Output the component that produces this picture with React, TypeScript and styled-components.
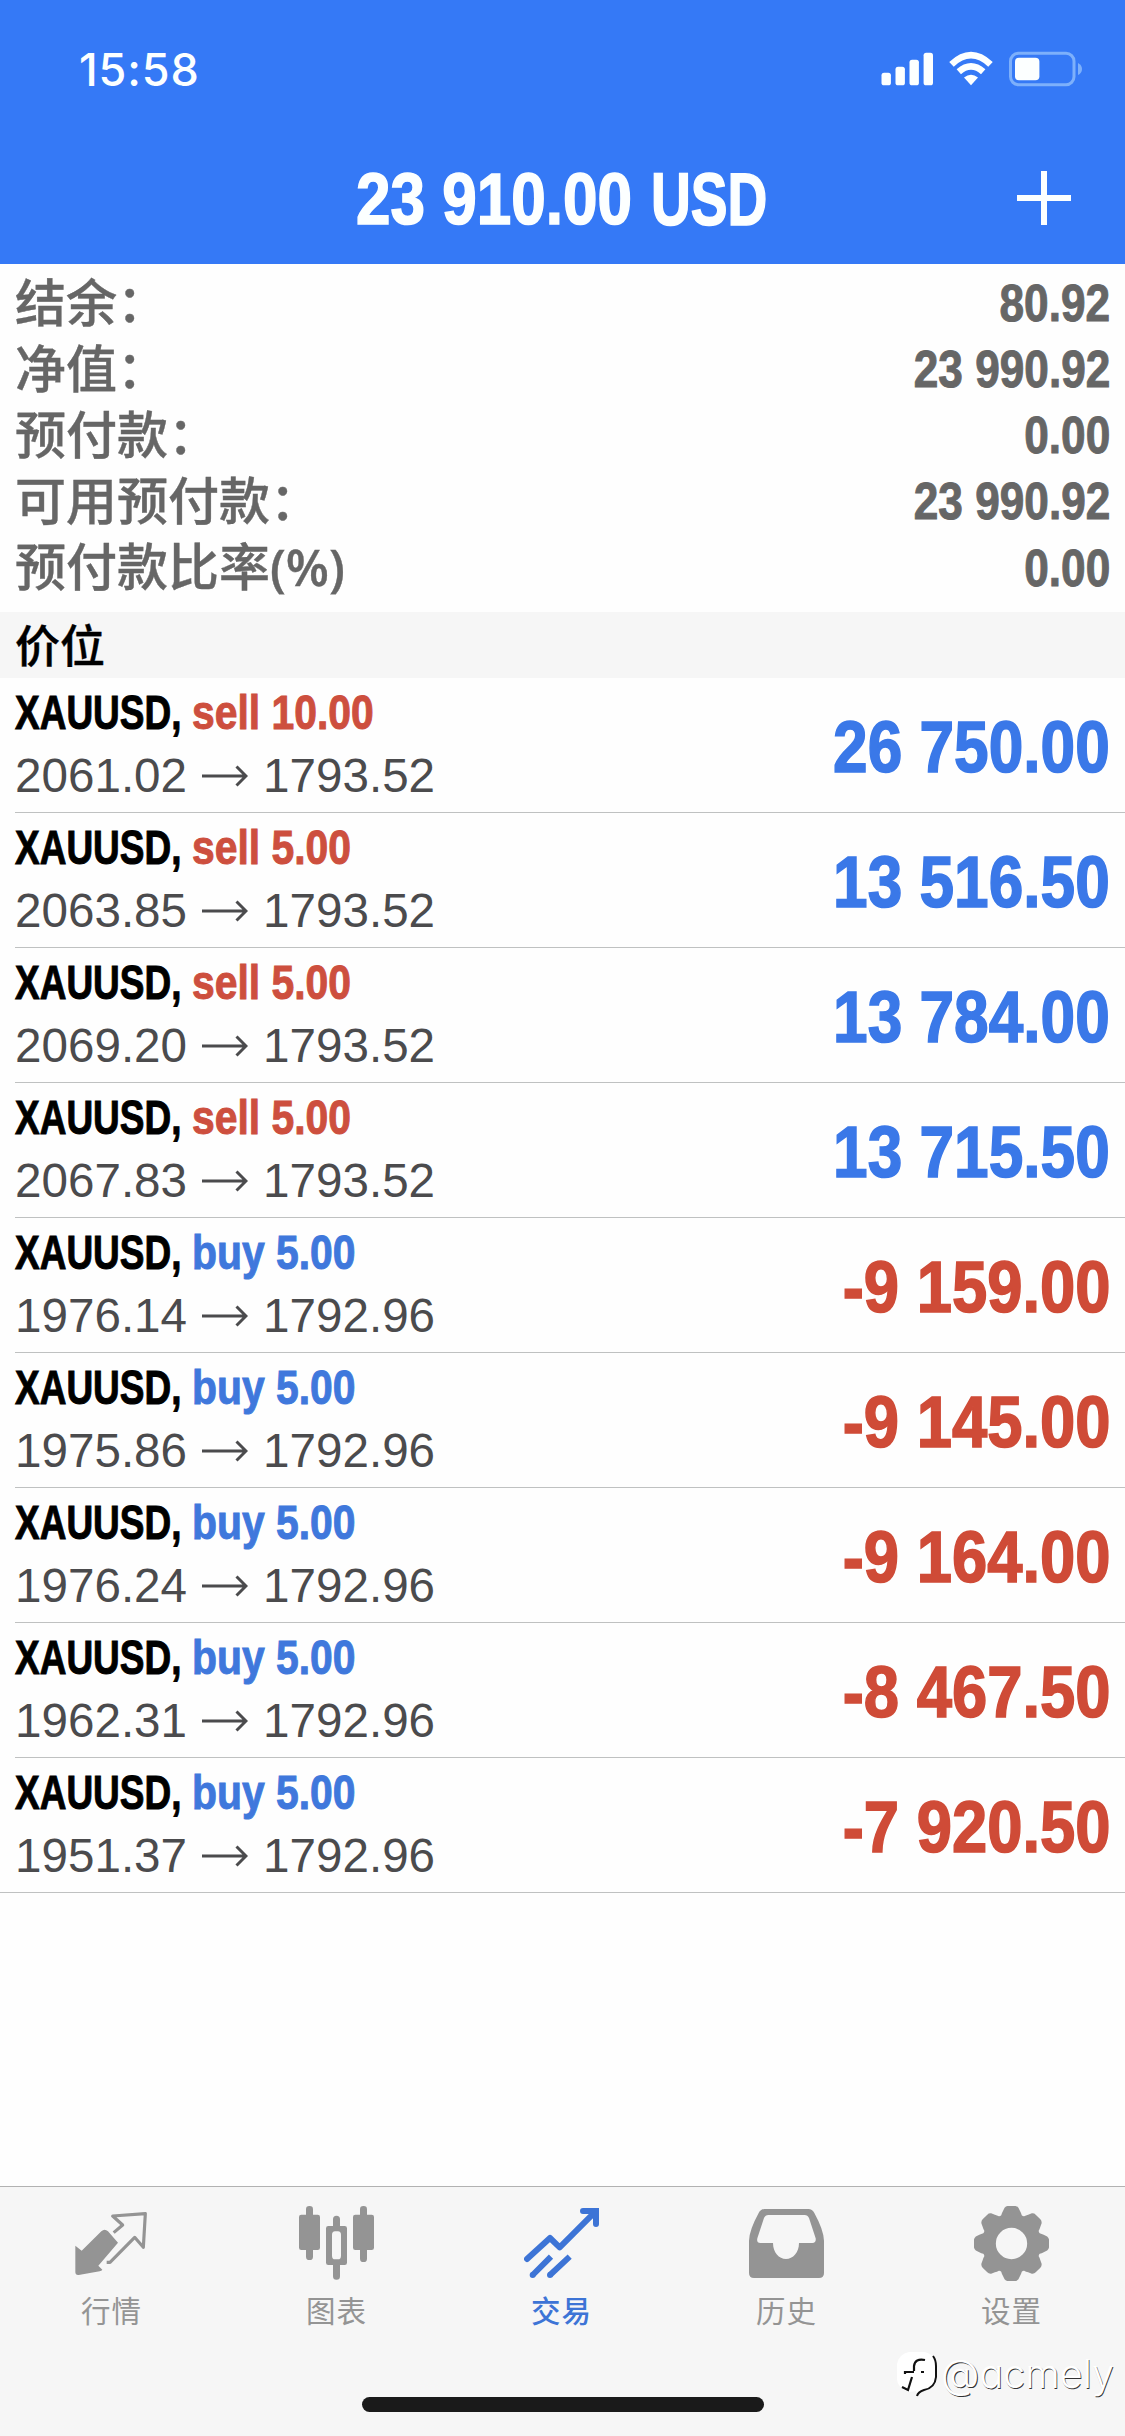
import React from 'react';
import styled, { createGlobalStyle } from 'styled-components';

const BLUE = '#3579f6';
const PROFIT = '#3a78e8';
const BUY = '#3f78dc';
const LOSS = '#cf4b37';
const SELL = '#cd4f3e';
const MUTED = '#949494';

const latin = "'Liberation Sans', Arial, 'Noto Sans CJK SC', sans-serif";
const cjk = "'Noto Sans CJK SC', sans-serif";

const GlobalStyle = createGlobalStyle`
  * { box-sizing: border-box; }
  body { margin: 0; background: #fff; }
`;

const Screen = styled.main`
  position: relative;
  display: flex;
  flex-direction: column;
  width: 1125px;
  height: 2436px;
  overflow: hidden;
  background: #fefefe;
  font-family: ${latin};
`;

const Header = styled.header`
  height: 264px;
  flex: none;
  background: ${BLUE};
  color: #fcffff;
`;

const StatusBar = styled.div`
  display: flex;
  justify-content: space-between;
  align-items: center;
  height: 138px;
  padding: 0 42px 0 79px;
`;

const Clock = styled.span`
  font: 550 45px/56px Inter, sans-serif;
  letter-spacing: 0.9px;
  padding-top: 1px;
`;

const StatusIcons = styled.svg`
  display: block;
  width: 203px;
  height: 36px;
`;

const TitleBar = styled.div`
  display: grid;
  grid-template-columns: 1fr auto 1fr;
  align-items: center;
  height: 122px;
`;

const Title = styled.h1`
  grid-column: 2;
  display: flex;
  margin: 1px 0 0;
`;

const AddButton = styled.button`
  justify-self: end;
  display: block;
  width: 54px;
  height: 54px;
  margin: 0 54px 3px 0;
  padding: 0;
  border: 0;
  background: none;
  color: inherit;
  svg { display: block; }
`;

/* Narrow bold face: glyphs are squeezed horizontally from one edge. */
const Condensed = styled.span<{
  $size: number;
  $scale: number;
  $width?: number;
  $color?: string;
  $from?: 'left' | 'right';
  $drop?: number;
}>`
  display: block;
  flex: none;
  width: ${p => (p.$width ? `${p.$width}px` : 'auto')};
  padding-top: ${p => p.$drop || 0}px;
  font-size: ${p => p.$size}px;
  line-height: 1.15;
  font-weight: 700;
  white-space: nowrap;
  color: ${p => p.$color || 'inherit'};
  -webkit-text-stroke: ${p => (p.$size > 60 ? 1.6 : 1)}px currentColor;
  transform: scaleX(${p => p.$scale});
  transform-origin: ${p => p.$from || 'left'} center;
`;

const Summary = styled.section`
  height: 348px;
  flex: none;
  padding: 6px 15px 0;
  color: #666;
`;

const SummaryRow = styled.div`
  display: flex;
  justify-content: space-between;
  align-items: center;
  height: 66.1px;
`;

const SummaryLabel = styled.span`
  padding-top: 3px;
  font-size: 51px;
  font-weight: 500;
  line-height: 63px;
  white-space: nowrap;
  font-family: 'Liberation Sans', 'Noto Sans CJK SC', sans-serif;
  -webkit-text-stroke: 0.4px currentColor;
`;

const Unit = styled.span`
  font-family: 'Open Sans', sans-serif;
  font-size: 50px;
  font-weight: 600;
  font-stretch: 88%;
  line-height: 1;
`;

const SectionTitle = styled.h2`
  flex: none;
  height: 66px;
  margin: 0;
  padding: 0 15px;
  background: #f6f6f6;
  color: #000;
  font: 500 45px/63px ${cjk};
  -webkit-text-stroke: 0.4px currentColor;
`;

const Positions = styled.ul`
  flex: none;
  margin: 0;
  padding: 0;
  list-style: none;
`;

const Position = styled.li<{ $last: boolean }>`
  display: flex;
  justify-content: space-between;
  align-items: center;
  height: 135px;
  margin-left: ${p => (p.$last ? 0 : 15)}px;
  padding: 0 15px 0 ${p => (p.$last ? 15 : 0)}px;
  border-bottom: 1px solid #bfc1c1;
`;

const Details = styled.div`
  display: flex;
  flex-direction: column;
  gap: 9px;
  padding-bottom: 4px;
`;

const Deal = styled.div`
  display: flex;
  height: 55px;
`;

const Prices = styled.div`
  display: flex;
  align-items: center;
  height: 55px;
  color: #4b4b4d;
  font-size: 47.6px;
  line-height: 55px;
  svg { display: block; margin: 2px 15px 0; }
`;

const TabBar = styled.nav`
  display: flex;
  flex-direction: column;
  align-items: center;
  height: 250px;
  margin-top: auto;
  border-top: 1px solid #b2b2b2;
  background: #f6f6f6;
`;

const Tabs = styled.div`
  display: flex;
  width: 100%;
  height: 210px;
`;

const Tab = styled.button<{ $active: boolean }>`
  display: flex;
  flex-direction: column;
  align-items: center;
  gap: 6px;
  width: 225px;
  padding: 19px 2px 0 0;
  border: 0;
  background: none;
  color: ${p => (p.$active ? '#3d74d6' : MUTED)};
  font: ${p => (p.$active ? 500 : 400)} 29.5px/44px ${cjk};
  letter-spacing: 1px;
  svg { display: block; }
`;

const HomeIndicator = styled.div`
  width: 402px;
  height: 15px;
  border-radius: 8px;
  background: #1a1a1a;
`;

const Watermark = styled.div`
  position: absolute;
  right: 11px;
  bottom: 39px;
  display: flex;
  align-items: center;
  gap: 4px;
  color: #fff;
  font: 300 39.5px/46px Inter, sans-serif;
  font-feature-settings: 'cv11';
  text-shadow: 0.8px 0.6px 0 #333;
  svg { display: block; overflow: visible; }
`;

const TAB_ICONS: Record<string, React.ReactNode> = {
  quotes: (
    <svg width="75" height="75" viewBox="222 108 225 225" fill="currentColor">
      <path d="M226 227 L245 242 L304 184 Q314 175 324 184 L354 218 L295 287 L307 299 Q305 303 299 304 L236 315 Q226 316 226 306 Z" />
      <path
        d="M341 188 L368 165 L338 138 L436 131 L430 232 L404 202 L330 277 H320"
        fill="none"
        stroke="currentColor"
        strokeWidth="9.5"
        strokeLinejoin="round"
      />
    </svg>
  ),
  chart: (
    <svg width="75" height="75" viewBox="897 108 225 225" fill="currentColor">
      <rect x="897" y="134" width="63" height="106" rx="7" />
      <rect x="918" y="108" width="21" height="162" rx="10" />
      <rect x="1059" y="134" width="63" height="106" rx="7" />
      <rect x="1080" y="108" width="21" height="168" rx="10" />
      <path
        fillRule="evenodd"
        d="M999 168 V148 a10.5 10.5 0 0 1 21 0 V168 H1034 q7 0 7 7 V278 q0 7 -7 7 H1020 V319 a10.5 10.5 0 0 1 -21 0 V285 H985 q-7 0 -7 -7 V175 q0 -7 7 -7 Z M1005 184 q-9 0 -9 11 V257 q0 11 9 11 H1014 q9 0 9 -11 V195 q0 -11 -9 -11 Z"
      />
    </svg>
  ),
  trade: (
    <svg
      width="75"
      height="75"
      viewBox="312 108 225 225"
      fill="none"
      stroke="currentColor"
      strokeWidth="18"
    >
      <path d="M321 267 L390 204 L419 232 L523 128" strokeLinecap="round" strokeLinejoin="round" />
      <path d="M489 123 H528 V162" strokeLinecap="round" />
      <path d="M500 114 H537 V152 L519 146 Z" fill="currentColor" stroke="none" />
      <path d="M338 315 L393 260 M390 315 L449 260" />
      <circle cx="338" cy="315" r="9" fill="currentColor" stroke="none" />
      <circle cx="390" cy="315" r="9" fill="currentColor" stroke="none" />
    </svg>
  ),
  history: (
    <svg width="75" height="75" viewBox="147 108 225 225" fill="currentColor">
      <path
        fillRule="evenodd"
        d="M194 117 H325 Q337 117 343 129 Q371 180 372 212 V309 Q372 324 357 324 H162 Q147 324 147 309 V212 Q148 180 176 129 Q182 117 194 117 Z M205 135 Q196 135 192 144 L172 205 Q169 219 181 219 H219 C219 248 237 267 258 267 S297 248 297 219 H337 Q349 219 347 205 L327 144 Q323 135 314 135 Z"
      />
    </svg>
  ),
  settings: (
    <svg width="75" height="75" viewBox="-112.5 -112.5 225 225" fill="currentColor">
      <path
        fillRule="evenodd"
        d={
          'M' +
          Array.from({ length: 8 }, (_, i) => {
            const pt = (r: number, deg: number) => {
              const a = ((deg + i * 45) * Math.PI) / 180;
              return `${(r * Math.cos(a)).toFixed(1)} ${(r * Math.sin(a)).toFixed(1)}`;
            };
            return `${pt(90, -20)} Q${pt(95, -18)} ${pt(100, -15)} L${pt(109, -11)} Q${pt(114, -8)} ${pt(113, -5)} L${pt(113, 5)} Q${pt(114, 8)} ${pt(109, 11)} L${pt(100, 15)} Q${pt(95, 18)} ${pt(90, 20)} Q${pt(88, 22.5)} ${pt(90, 25)}`;
          }).join(' L') +
          ' Z M47 0 A47 47 0 1 0 -47 0 A47 47 0 1 0 47 0 Z'
        }
      />
    </svg>
  ),
};

const TABS = [
  { icon: 'quotes', label: '行情' },
  { icon: 'chart', label: '图表' },
  { icon: 'trade', label: '交易' },
  { icon: 'history', label: '历史' },
  { icon: 'settings', label: '设置' },
];

const SUMMARY = [
  { label: '结余：', value: '80.92' },
  { label: '净值：', value: '23 990.92' },
  { label: '预付款：', value: '0.00' },
  { label: '可用预付款：', value: '23 990.92' },
  { label: '预付款比率', unit: '(%)', value: '0.00' },
];

const POSITIONS = [
  { side: 'sell', volume: '10.00', open: '2061.02', now: '1793.52', profit: '26 750.00' },
  { side: 'sell', volume: '5.00', open: '2063.85', now: '1793.52', profit: '13 516.50' },
  { side: 'sell', volume: '5.00', open: '2069.20', now: '1793.52', profit: '13 784.00' },
  { side: 'sell', volume: '5.00', open: '2067.83', now: '1793.52', profit: '13 715.50' },
  { side: 'buy', volume: '5.00', open: '1976.14', now: '1792.96', profit: '-9 159.00' },
  { side: 'buy', volume: '5.00', open: '1975.86', now: '1792.96', profit: '-9 145.00' },
  { side: 'buy', volume: '5.00', open: '1976.24', now: '1792.96', profit: '-9 164.00' },
  { side: 'buy', volume: '5.00', open: '1962.31', now: '1792.96', profit: '-8 467.50' },
  { side: 'buy', volume: '5.00', open: '1951.37', now: '1792.96', profit: '-7 920.50' },
];

function Status() {
  return (
    <StatusIcons viewBox="880 51 203 36" fill="currentColor">
      <rect x="881.5" y="72.7" width="9.4" height="12.6" rx="2.6" />
      <rect x="895.5" y="66.7" width="9.4" height="18.6" rx="2.6" />
      <rect x="909.5" y="59.7" width="9.4" height="25.6" rx="2.6" />
      <rect x="923.6" y="52.7" width="9.4" height="32.6" rx="2.6" />
      <path d="M971 85.3 L964 77.6 Q971 72 978 77.6 Z" />
      <path
        d="M951.5 64.3 Q971 46 990.5 64.3 M958.8 71.8 Q971 61 983.2 71.8"
        fill="none"
        stroke="currentColor"
        strokeWidth="6.6"
      />
      <rect x="1010.5" y="53.3" width="63.5" height="31.4" rx="8" fill="none" stroke="#7db0fb" strokeWidth="3" />
      <rect x="1015" y="57.7" width="24.4" height="22.6" rx="4" />
      <path d="M1078 63 Q1082 65 1082 69 T1078 75 Z" fill="#7db0fb" />
    </StatusIcons>
  );
}

function Arrow() {
  return (
    <svg width="46" height="22" viewBox="0 0 46 22" fill="none" stroke="currentColor" strokeWidth="3">
      <path d="M0 11 H44 M34.5 1.5 L44 11 L34.5 20.5" />
    </svg>
  );
}

export default function App() {
  return (
    <Screen>
      <GlobalStyle />
      <Header>
        <StatusBar>
          <Clock>15:58</Clock>
          <Status />
        </StatusBar>
        <TitleBar>
          <Title>
            <Condensed $size={73} $scale={0.85} $width={295}>23 910.00</Condensed>
            <Condensed $size={74} $scale={0.745} $width={119}>USD</Condensed>
          </Title>
          <AddButton aria-label="New order">
            <svg width="54" height="54" viewBox="0 0 54 54" fill="currentColor">
              <path d="M24 0h6v24h24v6H30v24h-6V30H0v-6h24z" />
            </svg>
          </AddButton>
        </TitleBar>
      </Header>

      <Summary>
        {SUMMARY.map(({ label, unit, value }) => (
          <SummaryRow key={label}>
            <SummaryLabel>
              {label}
              {unit && <Unit>{unit}</Unit>}
            </SummaryLabel>
            <Condensed $size={52} $scale={0.85} $from="right" $drop={2}>{value}</Condensed>
          </SummaryRow>
        ))}
      </Summary>

      <SectionTitle>价位</SectionTitle>
      <Positions>
        {POSITIONS.map((p, i) => {
          const negative = p.profit.startsWith('-');
          return (
            <Position key={p.open} $last={i === POSITIONS.length - 1}>
              <Details>
                <Deal>
                  <Condensed $size={49} $scale={0.755} $width={177} $color="#000">XAUUSD,</Condensed>
                  <Condensed $size={49} $scale={0.834} $width={180} $color={p.side === 'sell' ? SELL : BUY}>
                    {p.side} {p.volume}
                  </Condensed>
                </Deal>
                <Prices>
                  <span>{p.open}</span>
                  <Arrow />
                  <span>{p.now}</span>
                </Prices>
              </Details>
              <Condensed
                $size={73}
                $scale={negative ? 0.868 : 0.852}
                $from="right"
                $drop={4}
                $color={negative ? LOSS : PROFIT}
              >
                {p.profit}
              </Condensed>
            </Position>
          );
        })}
      </Positions>

      <TabBar>
        <Tabs>
          {TABS.map(t => (
            <Tab key={t.icon} $active={t.icon === 'trade'}>
              {TAB_ICONS[t.icon]}
              {t.label}
            </Tab>
          ))}
        </Tabs>
        <HomeIndicator />
      </TabBar>

      <Watermark>
        <svg width="40" height="45" viewBox="0 0 40 45">
          <path d="M12 0 H28 Q39 3 39 14 V25 Q38 36 26 38 Q20 40 20 44 L19 39 L12 40 Q0 36 0 27 V12 Q2 2 12 0 Z" fill="#fff" />
          <path d="M36 4 Q39 8 39 14 V25 Q38 36 27 38 Q21 40 20 44" fill="none" stroke="#111" strokeWidth="2" />
          <path d="M28 8 Q18 6 17 14 V19 M8 22 V20 H17 M24 20 H27 M15 25 L11 38 L5 35" fill="none" stroke="#111" strokeWidth="2.2" />
        </svg>
        @acmely
      </Watermark>
    </Screen>
  );
}
